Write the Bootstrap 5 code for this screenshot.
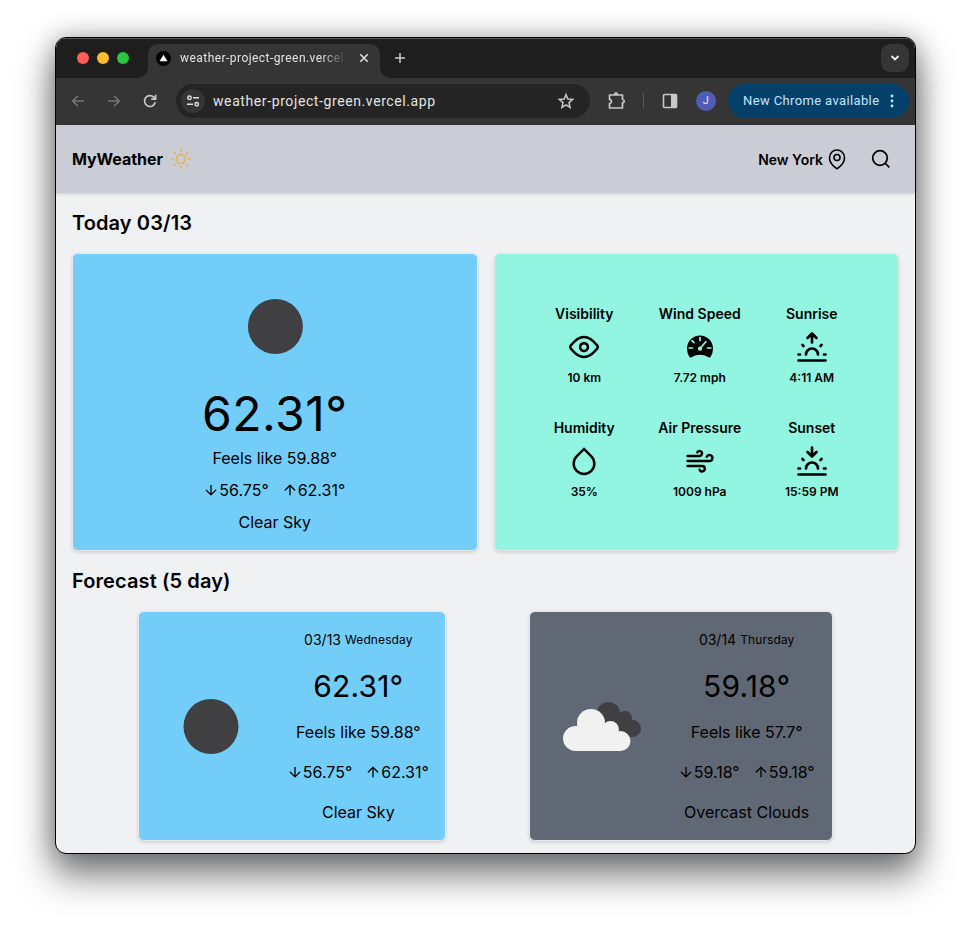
<!DOCTYPE html>
<html lang="en">
<head>
<meta charset="utf-8">
<meta name="viewport" content="width=device-width, initial-scale=1">
<title>MyWeather</title>
<link href="https://cdn.jsdelivr.net/npm/bootstrap@5.3.0/dist/css/bootstrap.min.css" rel="stylesheet">
<style>
html{overflow:hidden}
body{font-family:Inter,"Noto Sans",sans-serif;color:#000;background:#fff;height:927px;overflow:hidden;padding:37px 55px 0}
svg{display:block;flex:none}
.window{width:861px;height:817px;border:1px solid #000;border-radius:11px;background:#f0f1f3;box-shadow:0 20px 36px 2px rgba(0,0,0,.5),0 0 26px rgba(0,0,0,.27)}
.browser-top{border-radius:10px 10px 0 0}
.chrome-font{font-family:Roboto,"Noto Sans",sans-serif;letter-spacing:.3px}
.tabstrip{height:40px;background:#1e1e1e;box-shadow:inset 0 1px #555;padding:6px 6px 0 21px}
.light{width:12px;height:12px;border-radius:50%}
.light-close{background:#fe5f57}
.light-min{background:#febc2e}
.light-max{background:#28c840}
.page-tab{position:relative;width:232px;height:34px;background:#353535;border-radius:10px 10px 0 0;margin-left:19px;padding:0 10px 6px 8px;font-size:12px;color:#e3e3e3}
.page-tab::before,.page-tab::after{content:"";position:absolute;bottom:0;width:10px;height:10px}
.page-tab::before{left:-10px;background:radial-gradient(circle at 0 0,transparent 9.5px,#353535 10px)}
.page-tab::after{right:-10px;background:radial-gradient(circle at 100% 0,transparent 9.5px,#353535 10px)}
.tab-title{width:166px;margin-left:9px;letter-spacing:.45px;white-space:nowrap;overflow:hidden;-webkit-mask-image:linear-gradient(90deg,#000 85%,transparent)}
.new-tab{margin-left:14px}
.tab-menu{width:28px;height:28px;border-radius:9px;background:#353535}
.toolbar{height:47px;background:#353535;padding:0 6px 1px 13px}
.nav-icon{margin-left:18px}
.address{width:414px;height:34px;border-radius:17px;background:#242424;color:#e3e3e3;font-size:14px;letter-spacing:.6px;margin-left:17px;padding:0 15px 0 5px}
.site-info{width:24px;height:24px;border-radius:50%;background:#353535}
.ext-icon{margin-left:17px}
.tool-rule{height:16px;margin:0 18px 0 16px;align-self:center!important;color:#bbb}
.avatar{width:20px;height:20px;border-radius:50%;background:#515db5;color:#e6e9ff;font-size:11px;margin-left:18px}
.update{width:181px;height:34px;border-radius:17px;background:#05406b;color:#c2e3fb;font-size:13px;letter-spacing:.37px;padding:0 13px 0 15px}
.site-nav{height:68px;background:#cacdd6;padding:0 24px 0 16px;box-shadow:0 1px 3px rgba(0,0,0,.14)}
.brand{font-size:16px;font-weight:700;letter-spacing:-.05px}
.place{font-size:14px;font-weight:600}
.pin{margin-left:2px}
.search{margin-left:22px}
.section-title{font-size:20px;font-weight:600;line-height:28px;margin:0;letter-spacing:.1px}
.panel{border:1px solid #e5e7eb;border-radius:6px;box-shadow:0 1px 3px rgba(0,0,0,.08),0 2px 4px rgba(0,0,0,.08)}
.today-row{height:298px;margin:16px 0}
.today-pic{margin:22px 0 14px}
.sky{background:#73cdf9}
.mint{background:#92f5e1}
.slate{background:#616875}
.reading{font-size:16px;line-height:24px;white-space:nowrap}
.arrow{margin-right:1px}
.arrow-up{margin-left:14px}
.date{font-size:14px}
.day{font-size:12px;letter-spacing:.1px}
.temp-xl{font-size:48px;line-height:48px;letter-spacing:.5px}
.temp-lg{font-size:30px;line-height:36px;letter-spacing:.2px}
.metrics{display:grid;grid-template-columns:61px 84px 54px;column-gap:43px;row-gap:26px;justify-items:center;padding-top:2px}
.metric{height:88px;white-space:nowrap}
.metric-name{font-size:14px;font-weight:600;line-height:24px}
.metric-value{font-size:12px;font-weight:600;line-height:24px;margin-top:1px}
.metric svg{margin:3px 0 0}
.forecast{height:230px;padding:15px 13px 15px 15px}
.forecast-first{width:308px}
.forecast-second{width:304px}
</style>
</head>
<body>
<svg width="0" height="0" class="position-absolute">
<defs>
<g id="down" fill="none" stroke="currentColor" stroke-width="1.3" stroke-linecap="round" stroke-linejoin="round"><path d="M7 2.500v9.300M2.300 7.300 7 11.900l4.700-4.600"/></g>
<g id="up" fill="none" stroke="currentColor" stroke-width="1.3" stroke-linecap="round" stroke-linejoin="round"><path d="M7 11.800V2.300M2.300 7 7 2.300 11.700 7"/></g>
</defs>
</svg>
<div class="window d-flex flex-column">
  <div class="browser-top overflow-hidden">
  <div class="tabstrip chrome-font d-flex">
    <div class="d-flex gap-2 pt-2"><span class="light light-close"></span><span class="light light-min"></span><span class="light light-max"></span></div>
    <div class="page-tab d-flex align-items-center">
      <svg width="15" height="15" viewBox="0 0 15 15"><circle cx="7.500" cy="7.500" r="7.500"/><path fill="#fff" d="m7.500 3.700 4 6.500h-8z"/></svg>
      <span class="tab-title">weather-project-green.vercel.app</span>
      <svg class="ms-auto" width="12" height="12" viewBox="0 0 12 12" stroke="#ddd" stroke-width="1.600"><path d="m2.300 2.300 7.400 7.400m0-7.400-7.400 7.400"/></svg>
    </div>
    <svg class="new-tab mt-2" width="12" height="12" viewBox="0 0 12 12" stroke="#ccc" stroke-width="1.500"><path d="M6 1v10M1 6h10"/></svg>
    <div class="tab-menu ms-auto d-flex align-items-center justify-content-center"><svg width="12" height="12" viewBox="0 0 12 12" fill="none" stroke="#eee" stroke-width="1.800"><path d="m2.500 4 3.500 3.500L9.500 4"/></svg></div>
  </div>
  <div class="toolbar chrome-font d-flex align-items-center">
    <svg width="18" height="18" viewBox="0 0 18 18" fill="none" stroke="#777" stroke-width="1.500"><path d="M15 9H4m5-5.300L3.700 9 9 14.300"/></svg>
    <svg class="nav-icon" width="18" height="18" viewBox="0 0 18 18" fill="none" stroke="#777" stroke-width="1.500"><path d="M3 9h11M9 3.700 14.300 9 9 14.300"/></svg>
    <svg class="nav-icon" width="18" height="18" viewBox="0 0 18 18" fill="none" stroke="#c7c7c7" stroke-width="1.700"><path d="M14.200 10.300A5.400 5.400 0 1 1 12.700 5.200L14 6.500M14.600 2.700v4.400h-4.400"/></svg>
    <div class="address d-flex align-items-center">
      <span class="site-info d-flex align-items-center justify-content-center"><svg width="14" height="14" viewBox="0 0 14 14" fill="none" stroke="#ddd" stroke-width="1.500"><circle cx="3.500" cy="3.800" r="1.700"/><path d="M7 3.800h6M1 10.200h6"/><circle cx="10.700" cy="10.200" r="1.700"/></svg></span>
      <span class="ms-2">weather-project-green.vercel.app</span>
      <svg class="ms-auto" width="18" height="18" viewBox="0 0 18 18" fill="none" stroke="#c7c7c7" stroke-width="1.500"><path d="m9 2.500 1.800 4.500 4.900.4-3.700 3.200 1.100 4.800L9 12.900l-4.100 2.500L6 10.600 2.300 7.400 7.200 7z"/></svg>
    </div>
    <svg class="ext-icon" width="20" height="20" viewBox="0 0 20 20" fill="none" stroke="#c7c7c7" stroke-width="1.700"><path d="M2.500 4h13v4.500q1.700.2 1.700 1.700t-1.700 1.600v5.200h-13v-4.500q2-.6 2-2.100t-2-2z" stroke-linejoin="round"/><path d="M7.300 3.700q.2-1.700 1.700-1.700t1.700 1.700" fill="#c7c7c7"/></svg>
    <span class="vr tool-rule"></span>
    <svg width="16" height="16" viewBox="0 0 16 16"><rect x="1.500" y="1.500" width="13" height="13" rx="1" fill="none" stroke="#c7c7c7" stroke-width="1.600"/><path fill="#c7c7c7" d="M9 1h6v14H9z"/></svg>
    <span class="avatar d-flex align-items-center justify-content-center">J</span>
    <span class="update ms-auto d-flex align-items-center justify-content-between text-nowrap">New Chrome available<svg width="8" height="16" viewBox="0 0 8 16" fill="#c2e3fb"><circle cx="4" cy="3" r="1.400"/><circle cx="4" cy="8" r="1.400"/><circle cx="4" cy="13" r="1.400"/></svg></span>
  </div>
  </div>
  <nav class="site-nav d-flex align-items-center">
    <span class="brand">MyWeather</span>
    <svg class="ms-2" width="20" height="20" viewBox="0 0 20 20" fill="none" stroke="#e3b458" stroke-width="1.600"><circle cx="10" cy="10" r="4.500"/><path d="M10 0v3M10 17v3M0 10h3M17 10h3M3 3l2 2M15 15l2 2M3 17l2-2M15 5l2-2"/></svg>
    <span class="place ms-auto">New York</span>
    <svg class="pin" width="24" height="24" viewBox="0 0 24 24" fill="none" stroke="#000" stroke-width="1.600" stroke-linecap="round" stroke-linejoin="round"><path d="M15 10.500a3 3 0 1 1-6 0 3 3 0 0 1 6 0Z"/><path d="M19.500 10.500c0 7.142-7.500 11.250-7.500 11.250S4.500 17.642 4.500 10.500a7.500 7.500 0 1 1 15 0Z"/></svg>
    <svg class="search" width="20" height="20" viewBox="0 0 20 20" fill="none" stroke="#000" stroke-width="1.700" stroke-linecap="round"><circle cx="9" cy="9" r="7.300"/><path d="m14.500 14.500 3.300 3.300"/></svg>
  </nav>
  <main class="px-3 pt-3">
    <h2 class="section-title">Today 03/13</h2>
    <div class="today-row d-flex gap-3">
      <section class="panel sky flex-fill w-50 d-flex flex-column align-items-center">
        <svg class="today-pic" width="100" height="100" viewBox="0 0 100 100"><circle cx="50.400" cy="50.500" r="27.500" fill="#404042"/></svg>
        <div class="temp-xl">62.31°</div>
        <div class="reading mt-2">Feels like 59.88°</div>
        <div class="reading mt-2 d-flex align-items-center"><svg class="arrow" width="14" height="14"><use href="#down"/></svg>56.75°<svg class="arrow arrow-up" width="14" height="14"><use href="#up"/></svg>62.31°</div>
        <div class="reading mt-2">Clear Sky</div>
      </section>
      <section class="panel mint flex-fill w-50 d-flex align-items-center justify-content-center">
        <div class="metrics">
          <div class="metric d-flex flex-column align-items-center"><span class="metric-name">Visibility</span><svg width="36" height="36" viewBox="0 0 24 24" fill="none" stroke="#000" stroke-width="1.700"><circle cx="12" cy="12" r="2.600"/><path d="M2.800 12q0-.7 1-1.700Q7.800 5.300 12 5.300t8.200 5q1 1 1 1.700t-1 1.700q-4 5-8.200 5t-8.200-5q-1-1-1-1.700z"/></svg><span class="metric-value">10 km</span></div>
          <div class="metric d-flex flex-column align-items-center"><span class="metric-name">Wind Speed</span><svg width="36" height="36" viewBox="0 0 36 36"><path d="M5 19.500a13 13 0 0 1 26 0q0 4.500-2.300 8.200-.8 1.300-2.200.5Q18 23.500 9.500 28.200q-1.400.8-2.200-.5Q5 24 5 19.500z"/><path d="m18.500 19 5.300-6.300M18 8.500v3M10 11.700l2 2M7.200 19h3.300M25.500 19h3.300" stroke="#92f5e1" stroke-width="1.700" stroke-linecap="round"/><circle cx="18" cy="19.700" r="2.100" fill="#92f5e1"/></svg><span class="metric-value">7.72 mph</span></div>
          <div class="metric d-flex flex-column align-items-center"><span class="metric-name">Sunrise</span><svg width="36" height="36" viewBox="0 0 24 24" fill="none" stroke="#000" stroke-width="1.800" stroke-linecap="round" stroke-linejoin="round"><path d="M3 17h1m16 0h1M5.600 10.600l.7.7m12.100-.7-.7.700M8 17a4 4 0 0 1 8 0M3 21h18M12 9V3l3 3M9 6l3-3"/></svg><span class="metric-value">4:11 AM</span></div>
          <div class="metric d-flex flex-column align-items-center"><span class="metric-name">Humidity</span><svg width="36" height="36" viewBox="0 0 24 24" fill="none" stroke="#000" stroke-width="1.600"><path d="M12 4 7.100 8.900a6.900 6.900 0 1 0 9.800 0z"/></svg><span class="metric-value">35%</span></div>
          <div class="metric d-flex flex-column align-items-center"><span class="metric-name">Air Pressure</span><svg width="36" height="36" viewBox="0 0 36 36" fill="none" stroke="#000" stroke-width="2.400" stroke-linecap="round"><path d="M5.500 13H17.500a2.500 2.500 0 1 0-2.200-3.700M5.500 18H27.500a3 3 0 1 0-2.800-4.200M5.500 23H20a2.700 2.700 0 1 1-2.400 3.700"/></svg><span class="metric-value">1009 hPa</span></div>
          <div class="metric d-flex flex-column align-items-center"><span class="metric-name">Sunset</span><svg width="36" height="36" viewBox="0 0 24 24" fill="none" stroke="#000" stroke-width="1.800" stroke-linecap="round" stroke-linejoin="round"><path d="M3 17h1m16 0h1M5.600 10.600l.7.7m12.100-.7-.7.700M8 17a4 4 0 0 1 8 0M3 21h18M12 3v6l3-3M9 6l3 3"/></svg><span class="metric-value">15:59 PM</span></div>
        </div>
      </section>
    </div>
    <h2 class="section-title">Forecast (5 day)</h2>
    <div class="d-flex gap-3 justify-content-evenly mt-3">
      <section class="panel forecast forecast-first sky d-flex align-items-center gap-3">
        <svg width="114" height="100" viewBox="0 0 114 100"><circle cx="57" cy="50.500" r="27.500" fill="#404042"/></svg>
        <div class="flex-fill d-flex flex-column align-items-center gap-3">
          <div class="reading d-flex align-items-center gap-1"><span class="date">03/13</span><span class="day">Wednesday</span></div>
          <div class="temp-lg">62.31°</div>
          <div class="reading">Feels like 59.88°</div>
          <div class="reading d-flex align-items-center"><svg class="arrow" width="14" height="14"><use href="#down"/></svg>56.75°<svg class="arrow arrow-up" width="14" height="14"><use href="#up"/></svg>62.31°</div>
          <div class="reading">Clear Sky</div>
        </div>
      </section>
      <section class="panel forecast forecast-second slate d-flex align-items-center gap-3">
        <svg width="114" height="100" viewBox="0 0 114 100"><g fill="#404042"><circle cx="63.500" cy="37.500" r="11.500"/><circle cx="80" cy="42" r="7"/><circle cx="87.500" cy="52.500" r="8.500"/><path d="M60 40h22l6 21H62z"/></g><g fill="#f1f1f1"><circle cx="30.500" cy="62.500" r="12.500"/><circle cx="46" cy="47" r="14"/><circle cx="65.500" cy="53.500" r="8.500"/><circle cx="75.500" cy="65" r="10"/><path d="M30 50h41l5 25H30z"/></g></svg>
        <div class="flex-fill d-flex flex-column align-items-center gap-3">
          <div class="reading d-flex align-items-center gap-1"><span class="date">03/14</span><span class="day">Thursday</span></div>
          <div class="temp-lg">59.18°</div>
          <div class="reading">Feels like 57.7°</div>
          <div class="reading d-flex align-items-center"><svg class="arrow" width="14" height="14"><use href="#down"/></svg>59.18°<svg class="arrow arrow-up" width="14" height="14"><use href="#up"/></svg>59.18°</div>
          <div class="reading">Overcast Clouds</div>
        </div>
      </section>
    </div>
  </main>
</div>
<script src="https://cdn.jsdelivr.net/npm/bootstrap@5.3.0/dist/js/bootstrap.bundle.min.js"></script>
</body>
</html>
